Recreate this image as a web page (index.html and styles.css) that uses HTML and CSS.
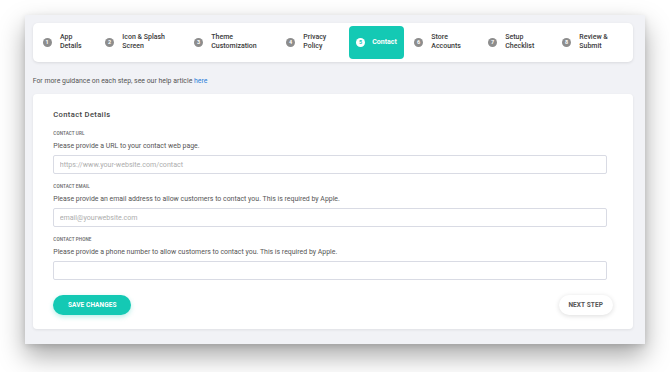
FILE: index.html
```html
<!DOCTYPE html>
<html>
<head>
<meta charset="utf-8">
<link rel="stylesheet" href="styles.css">
</head>
<body>
<div class="window">
  <div class="steps">
    <div class="step"><span class="num">1</span><span class="lbl">App<br>Details</span></div>
    <div class="step"><span class="num">2</span><span class="lbl">Icon &amp; Splash<br>Screen</span></div>
    <div class="step"><span class="num">3</span><span class="lbl">Theme<br>Customization</span></div>
    <div class="step"><span class="num">4</span><span class="lbl">Privacy<br>Policy</span></div>
    <div class="step active"><span class="num">5</span><span class="lbl">Contact</span></div>
    <div class="step"><span class="num">6</span><span class="lbl">Store<br>Accounts</span></div>
    <div class="step"><span class="num">7</span><span class="lbl">Setup<br>Checklist</span></div>
    <div class="step"><span class="num">8</span><span class="lbl">Review &amp;<br>Submit</span></div>
  </div>
  <p class="help">For more guidance on each step, see our help article <a href="#">here</a></p>
  <div class="card">
    <h2 class="title">Contact Details</h2>
    <div class="field">
      <div class="label">CONTACT URL</div>
      <div class="desc">Please provide a URL to your contact web page.</div>
      <input class="input" type="text" placeholder="https://www.your-website.com/contact">
    </div>
    <div class="field">
      <div class="label">CONTACT EMAIL</div>
      <div class="desc">Please provide an email address to allow customers to contact you. This is required by Apple.</div>
      <input class="input" type="text" placeholder="email@yourwebsite.com">
    </div>
    <div class="field">
      <div class="label">CONTACT PHONE</div>
      <div class="desc">Please provide a phone number to allow customers to contact you. This is required by Apple.</div>
      <input class="input" type="text">
    </div>
    <div class="actions">
      <button class="btn save">SAVE CHANGES</button>
      <button class="btn next">NEXT STEP</button>
    </div>
  </div>
</div>
</body>
</html>
```

FILE: styles.css
```css
* { box-sizing: border-box; }
html, body { margin: 0; padding: 0; background: #ffffff; }
body {
  font-family: Roboto, "Liberation Sans", Arial, sans-serif;
  width: 670px;
  height: 372px;
  overflow: hidden;
}
.window {
  margin: 15px 0 0 25px;
  width: 620px;
  height: 329px;
  background: #f1f2f6;
  padding: 7.7px 12.3px 0 7.7px;
  box-shadow: 0 12px 24px rgba(0,0,0,0.34), 0 2px 6px rgba(0,0,0,0.12);
}
.steps {
  height: 39.6px;
  background: #fff;
  border-radius: 5px;
  box-shadow: 0 1px 3px rgba(0,0,0,0.1);
  display: grid;
  grid-template-columns: 62.3px 89px 92px 63px 65px 74px 74px 1fr;
  align-items: center;
  padding-left: 10px;
}
.step {
  display: flex;
  align-items: center;
  gap: 8.3px;
  font-size: 7px;
  line-height: 9.7px;
  font-weight: 500;
  color: #3a3a3a;
}
.num {
  width: 9px;
  height: 9px;
  border-radius: 50%;
  background: #8d8d8d;
  color: #fff;
  font-size: 5.5px;
  font-weight: 700;
  line-height: 9px;
  text-align: center;
  flex: none;
}
.step.active {
  background: #14c9b4;
  color: #fff;
  height: 32.7px;
  width: 55px;
  border-radius: 4px;
  padding-left: 7px;
  gap: 7.2px;
  font-weight: 700;
}
.step.active .num { background: #fff; color: #14c9b4; }
.help {
  margin: 13.7px 0 8px 0;
  font-size: 6.9px;
  line-height: 10px;
  color: #555;
}
.help a { color: #2b7fd9; text-decoration: none; }
.card {
  background: #fff;
  border-radius: 4px;
  box-shadow: 0 1px 3px rgba(0,0,0,0.08);
  height: 235.3px;
  padding: 16px 20px 0 20.6px;
}
.title {
  margin: 0 0 10.3px 0;
  font-size: 7.6px;
  line-height: 10px;
  font-weight: 500;
  letter-spacing: 0.35px;
  color: #444;
}
.field { margin-bottom: 9.1px; }
.label {
  font-size: 4.6px;
  line-height: 8px;
  font-weight: 500;
  color: #666;
  letter-spacing: 0.1px;
  margin-bottom: 2.7px;
}
.desc {
  font-size: 6.95px;
  line-height: 10px;
  color: #555;
  margin-bottom: 4px;
}
.input {
  display: block;
  width: 554px;
  height: 19.3px;
  border: 1px solid #d9dbe4;
  border-radius: 2px;
  padding: 0 5.5px;
  font-family: Roboto, "Liberation Sans", Arial, sans-serif;
  font-size: 7.1px;
  color: #444;
  background: #fff;
  outline: none;
}
.input::placeholder { color: #adadad; }
.actions {
  display: flex;
  justify-content: space-between;
  margin-top: 14.3px;
}
.btn {
  height: 20px;
  border-radius: 10px;
  border: none;
  font-family: Roboto, "Liberation Sans", Arial, sans-serif;
  font-size: 6.5px;
  font-weight: 700;
  padding: 0;
  letter-spacing: 0.1px;
}
.save {
  width: 78px;
  background: #14c9b4;
  color: #fff;
  box-shadow: 0 2px 5px rgba(20,201,180,0.3);
}
.next {
  width: 54px;
  background: #fff;
  color: #555;
  font-size: 6.5px;
  box-shadow: 0 1px 5px rgba(0,0,0,0.14);
}
```
